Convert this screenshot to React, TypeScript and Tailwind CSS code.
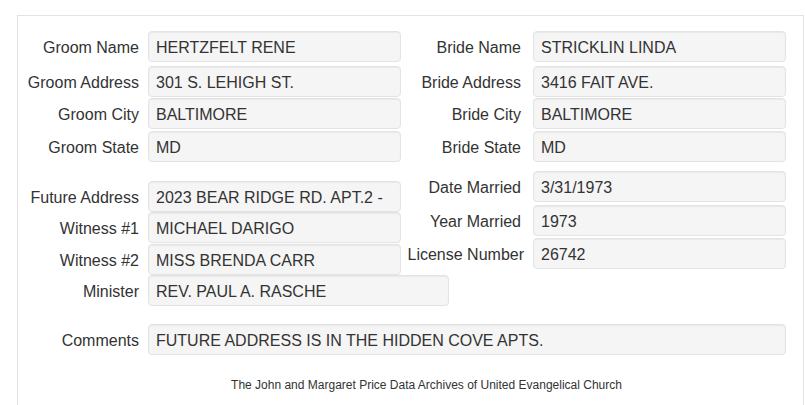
import React from "react";

type RowProps = {
  label: string;
  value: string;
  labelW: string;
  boxW: string;
  className?: string;
};

// one label + read-only value box
const Row: React.FC<RowProps> = ({ label, value, labelW, boxW, className }) => {
  return (
    <div className={`flex items-center ${className || ""}`}>
      <div className={`${labelW} shrink-0 pt-[3px] text-right whitespace-nowrap`}>{label}</div>
      <div
        className={`${boxW} shrink-0 h-[31px] leading-[31px] pl-[7px] bg-[#f5f5f5] border border-[#e3e3e3] rounded-[4px] shadow-[inset_0_1px_1px_rgba(0,0,0,0.05)] whitespace-nowrap overflow-hidden`}
      >
        {value}
      </div>
    </div>
  );
};

const L = "w-[130px] pr-[9px]";
const R = "w-[132px] pr-[12px]";
const BOX = "w-[253px]";

export default function App() {
  return (
    <div className="min-h-[405px] bg-white text-[#333] text-[16px] font-['Liberation_Sans',Arial,sans-serif]">
      <div className="ml-[17px] mt-[15px] w-[787px] h-[390px] border border-b-0 border-[#e3e3e3] pt-[15px]">
        {/* groom / bride */}
        <div className="flex">
          <div className="w-[383px] shrink-0">
            <Row label="Groom Name" value="HERTZFELT RENE" labelW={L} boxW={BOX} />
            <Row label="Groom Address" value="301 S. LEHIGH ST." labelW={L} boxW={BOX} className="mt-[4px]" />
            <Row label="Groom City" value="BALTIMORE" labelW={L} boxW={BOX} className="mt-[1px]" />
            <Row label="Groom State" value="MD" labelW={L} boxW={BOX} className="mt-[2px]" />
          </div>
          <div className="w-[385px] shrink-0">
            <Row label="Bride Name" value="STRICKLIN LINDA" labelW={R} boxW={BOX} />
            <Row label="Bride Address" value="3416 FAIT AVE." labelW={R} boxW={BOX} className="mt-[4px]" />
            <Row label="Bride City" value="BALTIMORE" labelW={R} boxW={BOX} className="mt-[1px]" />
            <Row label="Bride State" value="MD" labelW={R} boxW={BOX} className="mt-[2px]" />
          </div>
        </div>

        {/* other details */}
        <div className="flex items-start mt-[9px]">
          <div className="w-[383px] shrink-0 pt-[10px]">
            <Row label="Future Address" value="2023 BEAR RIDGE RD. APT.2 -" labelW={L} boxW={BOX} />
            <Row label="Witness #1" value="MICHAEL DARIGO" labelW={L} boxW={BOX} />
            <Row label="Witness #2" value="MISS BRENDA CARR" labelW={L} boxW={BOX} className="mt-[1px]" />
            <Row label="Minister" value="REV. PAUL A. RASCHE" labelW={L} boxW="w-[301px]" />
          </div>
          <div className="w-[385px] shrink-0">
            <Row label="Date Married" value="3/31/1973" labelW={R} boxW={BOX} />
            <Row label="Year Married" value="1973" labelW={R} boxW={BOX} className="mt-[3px]" />
            <Row label="License Number" value="26742" labelW="w-[132px] pr-[9px]" boxW={BOX} className="mt-[2px]" />
          </div>
        </div>

        <Row
          label="Comments"
          value="FUTURE ADDRESS IS IN THE HIDDEN COVE APTS."
          labelW={L}
          boxW="w-[638px]"
          className="mt-[18px]"
        />

        <p className="mt-[22px] pl-[32px] text-center text-[12px] leading-[17px]">
          The John and Margaret Price Data Archives of United Evangelical Church
        </p>
      </div>
    </div>
  );
}
